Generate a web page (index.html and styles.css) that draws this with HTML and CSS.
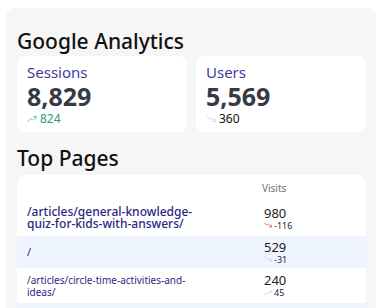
FILE: index.html
```html
<!DOCTYPE html>
<html lang="en">
<head>
  <meta charset="UTF-8">
  <meta name="viewport" content="width=device-width, initial-scale=1.0">
  <title>Google Analytics</title>
  <link rel="stylesheet" href="styles.css">
</head>
<body>
  <div class="panel">
    <h2>Google Analytics</h2>

    <div class="stats">
      <div class="stat-card">
        <div class="stat-label">Sessions</div>
        <div class="stat-value">8,829</div>
        <div class="stat-change up">
          <svg class="trend" viewBox="0 0 24 24"><polyline points="2 18 9 11 13 15 22 6"/><polyline points="16 6 22 6 22 12"/></svg>
          824
        </div>
      </div>
      <div class="stat-card">
        <div class="stat-label">Users</div>
        <div class="stat-value">5,569</div>
        <div class="stat-change flat">
          <svg class="trend faint" viewBox="0 0 24 24"><polyline points="2 6 9 13 13 9 22 18"/><polyline points="16 18 22 18 22 12"/></svg>
          360
        </div>
      </div>
    </div>

    <h2>Top Pages</h2>

    <div class="table-card">
      <table class="pages">
        <thead>
          <tr>
            <th></th>
            <th class="col-visits">Visits</th>
          </tr>
        </thead>
        <tbody>
          <tr>
            <td><a class="page-link size-lg" href="#">/articles/general-knowledge-quiz-for-kids-with-answers/</a></td>
            <td class="col-visits">
              <div class="visits">980</div>
              <div class="delta">
                <svg class="trend down" viewBox="0 0 24 24"><polyline points="2 6 9 13 13 9 22 18"/><polyline points="16 18 22 18 22 12"/></svg>
                -116
              </div>
            </td>
          </tr>
          <tr>
            <td><a class="page-link size-md" href="#">/</a></td>
            <td class="col-visits">
              <div class="visits">529</div>
              <div class="delta">
                <svg class="trend faint" viewBox="0 0 24 24"><polyline points="2 6 9 13 13 9 22 18"/><polyline points="16 18 22 18 22 12"/></svg>
                -31
              </div>
            </td>
          </tr>
          <tr>
            <td><a class="page-link size-sm" href="#">/articles/circle-time-activities-and-ideas/</a></td>
            <td class="col-visits">
              <div class="visits">240</div>
              <div class="delta">
                <svg class="trend faint" viewBox="0 0 24 24"><polyline points="2 18 9 11 13 15 22 6"/><polyline points="16 6 22 6 22 12"/></svg>
                45
              </div>
            </td>
          </tr>
          <tr>
            <td><a class="page-link size-sm" href="#">/articles/</a></td>
            <td class="col-visits">
              <div class="visits">198</div>
            </td>
          </tr>
        </tbody>
      </table>
    </div>
  </div>
</body>
</html>
```

FILE: styles.css
```css
html, body {
  overflow: hidden;
}
body {
  font-family: "Noto Sans", "Open Sans", sans-serif;
  margin: 0;
  padding: 8px 5px 0 6px;
  background-color: #fff;
  color: #1f2328;
}
.panel {
  background-color: #f6f6f6;
  border-radius: 9px 9px 0 0;
  padding: 19px 10px 0 11px;
  height: 300px;
  box-sizing: border-box;
  overflow: hidden;
}
h2 {
  font-size: 21px;
  font-weight: 500;
  line-height: 28px;
  margin: 0 0 1px;
  color: #111;
}
.stats {
  display: grid;
  grid-template-columns: 1fr 1fr;
  gap: 9px;
  margin-bottom: 12px;
}
.stat-card {
  background-color: #fff;
  border-radius: 8px;
  padding: 7px 10px 6px;
  height: 63px;
}
.stat-label {
  color: #3f3b9e;
  font-size: 15px;
  line-height: 19px;
}
.stat-value {
  color: #353a44;
  font-size: 25px;
  font-weight: 700;
  line-height: 29px;
}
.stat-change {
  display: flex;
  align-items: center;
  gap: 3px;
  font-size: 12px;
  line-height: 15px;
}
.stat-change.up {
  color: #2f9c73;
}
.stat-change.flat {
  color: #111;
}
.trend {
  width: 10px;
  height: 10px;
  fill: none;
  stroke: #4cc295;
  stroke-width: 2;
  stroke-linecap: round;
  stroke-linejoin: round;
}
.trend.faint {
  stroke: #c9cdd3;
}
.trend.down {
  stroke: #c8334a;
}
.table-card {
  background-color: #fff;
  border-radius: 9px 9px 0 0;
  margin-top: 3px;
  overflow: hidden;
}
.pages {
  width: 100%;
  border-collapse: collapse;
}
.pages th {
  font-size: 10px;
  font-weight: 400;
  color: #6b7079;
  text-align: left;
  height: 25px;
  padding: 0;
}
.pages td {
  padding: 0 10px;
  vertical-align: middle;
}
.pages tbody tr:nth-child(even) {
  background-color: #eff5ff;
}
.pages tbody tr:nth-child(1) { height: 36px; }
.pages tbody tr:nth-child(2) { height: 32px; }
.pages tbody tr:nth-child(3) { height: 35px; }
.pages tbody tr:nth-child(4) { height: 44px; }
.col-visits {
  width: 102px;
}
.pages td.col-visits {
  padding: 0 0 0 2px;
}
.page-link {
  color: #2b2780;
  text-decoration: none;
  display: block;
  max-width: 172px;
  word-break: break-word;
}
.size-lg {
  font-size: 12px;
  font-weight: 500;
  line-height: 12px;
}
.size-md {
  font-size: 11px;
  line-height: 12px;
}
.size-sm {
  font-size: 10px;
  line-height: 12px;
}
.visits {
  font-size: 13px;
  line-height: 14px;
  color: #1d1d1f;
}
.delta {
  display: flex;
  align-items: center;
  gap: 2px;
  font-size: 9px;
  line-height: 11px;
  color: #1f1d3a;
}
.delta .trend {
  width: 8px;
  height: 8px;
}
```
